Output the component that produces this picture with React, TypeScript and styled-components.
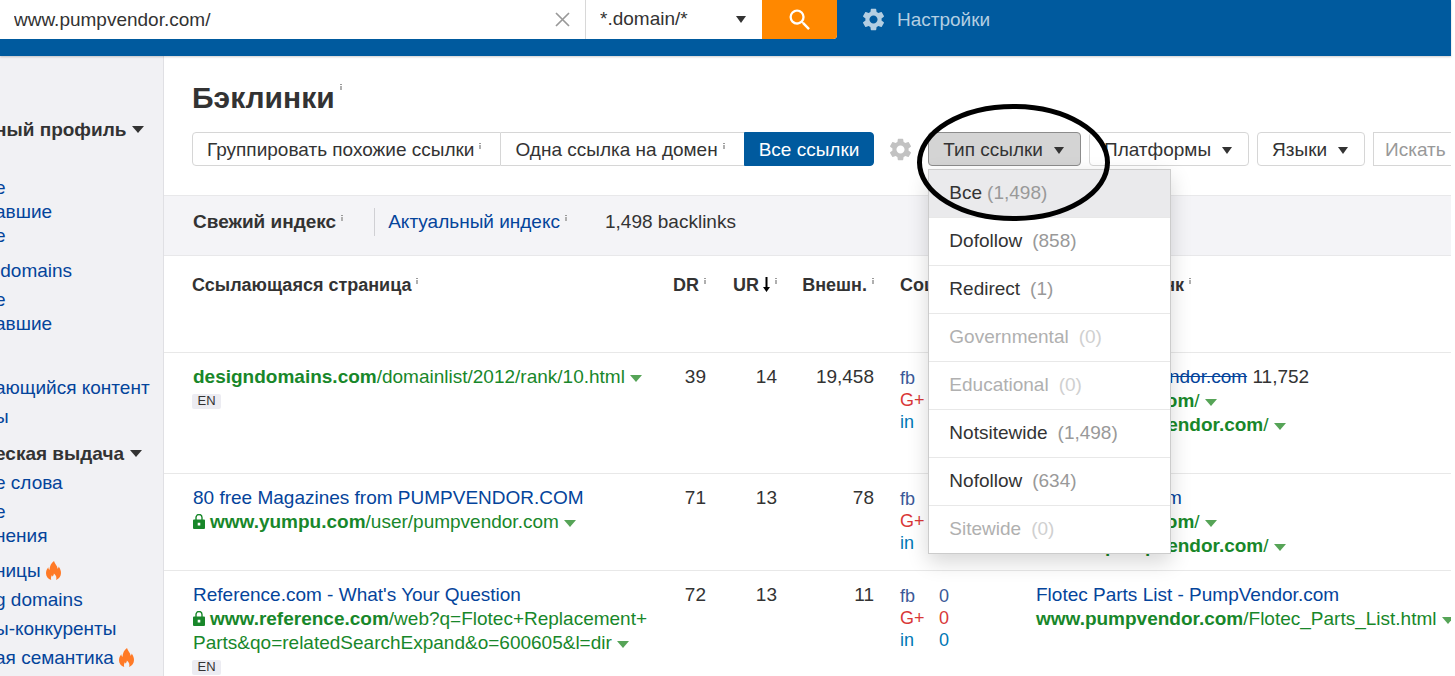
import React from "react";
import styled, { createGlobalStyle } from "styled-components";
import { MdSettings, MdSearch } from "react-icons/md";

const c = {
  blue: "#005a9e",
  orange: "#ff8800",
  link: "#04449b",
  green: "#18872a",
  caretGreen: "#56a457",
  text: "#333333",
  line: "#e8e8e8",
};

const GlobalStyle = createGlobalStyle`
  * { box-sizing: border-box; }
  body {
    margin: 0;
    background: #fff;
    color: ${c.text};
    font: 19px/24px "Liberation Sans", Arial, sans-serif;
  }
  button, input, select { font: inherit; color: inherit; margin: 0; }
  a { text-decoration: none; color: ${c.link}; }
  ul { list-style: none; margin: 0; padding: 0; }
`;

const Page = styled.div`
  display: flex;
  flex-direction: column;
  height: 100vh;
  padding-right: 4px;
  overflow: hidden;
`;

/* ---------- top bar ---------- */

const TopBar = styled.header`
  display: flex;
  align-items: flex-start;
  flex: none;
  height: 56px;
  background: ${c.blue};
  box-shadow: 0 1px 2px rgba(0, 0, 0, 0.2);
  position: relative;
`;

const SearchForm = styled.form`
  display: flex;
  height: 39px;
  background: #fff;
  border-radius: 0 0 4px 0;
`;

const UrlField = styled.div`
  display: flex;
  align-items: center;
  width: 586px;
  padding: 0 15px 0 14px;
  border-right: 1px solid #d8d8d8;
`;

const UrlInput = styled.input`
  flex: 1;
  min-width: 0;
  padding: 0;
  border: 0;
  outline: 0;
  background: none;
`;

const ClearButton = styled.button`
  display: flex;
  padding: 0;
  border: 0;
  background: none;
`;

const ModeField = styled.div`
  display: flex;
  align-items: center;
  width: 176px;
  padding-right: 16px;
`;

const ModeSelect = styled.select`
  flex: 1;
  min-width: 0;
  padding: 0 0 2px 14px;
  border: 0;
  outline: 0;
  background: none;
  appearance: none;
`;

const SearchButton = styled.button`
  display: flex;
  align-items: center;
  justify-content: center;
  width: 75px;
  padding: 0;
  border: 0;
  border-radius: 0 0 4px 0;
  background: ${c.orange};
  color: #fff;
`;

const SettingsLink = styled.a`
  display: flex;
  align-items: center;
  gap: 10px;
  height: 39px;
  margin-left: 23px;
  color: #b3cee2;
`;

/* ---------- shared marks ---------- */

const Caret = styled.span<{ $wide?: boolean }>`
  display: inline-block;
  flex: none;
  border: ${(p) => (p.$wide ? "6px" : "5px")} solid transparent;
  border-top: 7px solid ${c.text};
  border-bottom: 0;
`;

const InfoSvg = styled.svg`
  flex: none;
  margin-left: 5px;
  vertical-align: 7px;
`;

const Info = () => (
  <InfoSvg width="2" height="6" viewBox="0 0 2 6" aria-hidden="true">
    <path d="M0 0h2v1H0z" fill="#999" />
    <path d="M0 2h2v4H0z" fill="#b0b0b0" />
  </InfoSvg>
);

/* ---------- sidebar ---------- */

const Body = styled.div`
  display: flex;
  flex: 1;
  min-height: 0;
`;

const Sidebar = styled.nav`
  flex: none;
  width: 164px;
  padding-top: 59px;
  overflow: hidden;
  white-space: nowrap;
  background: #f1f1f4;
  border-right: 1px solid #e0e0e4;
`;

const Group = styled.section`
  margin: 0 0 8px -5px;
`;

const GroupTitle = styled.h2`
  display: flex;
  align-items: center;
  gap: 6px;
  margin: 0;
  font-size: 19px;
  line-height: 29px;
`;

const Item = styled.li`
  display: flex;
  align-items: center;
  gap: 5px;
  min-height: 29px;
`;

const SubList = styled.ul`
  padding: 3px 0 8px;
`;

const SubItem = styled.li`
  height: 24px;
`;

const Flame = () => (
  <svg width="15" height="19" viewBox="0 0 15 19" aria-hidden="true">
    <path
      fill="#ff7a26"
      d="M8 0c.5 2.600 3.400 4.600 3.600 7.700.7-.4 1-1.200 1-2.100C14.200 7.600 15 9.800 15 12c0 3.200-1.800 5.700-4.900 7 .8-2.500.1-4.700-2.200-6.500-.1 1.500-.6 2.300-1.400 3-.1-.5-.4-.9-.7-1.200-.8 1.500-1 3-.6 4.700C2 17.900 0 15.400 0 12.200c0-2.200.8-4.200 2.300-6 .1 1.300.5 2.100 1.200 2.600C3.700 5.200 5.100 2.100 8 0z"
    />
  </svg>
);

/* ---------- main ---------- */

const Main = styled.main`
  flex: 1;
  min-width: 0;
  overflow: hidden;
`;

const Title = styled.h1`
  display: flex;
  align-items: flex-start;
  margin: 24px 0 16px 28px;
  font-size: 30px;
  line-height: 36px;
`;

const TitleInfo = styled.span`
  display: flex;
  padding-top: 4px;
`;

const Toolbar = styled.div`
  display: flex;
  align-items: center;
  gap: 8px;
  height: 34px;
  margin: 0 0 29px 28px;
  white-space: nowrap;
`;

const Segments = styled.div`
  display: flex;
  flex: none;
`;

const Segment = styled.button<{ $active?: boolean }>`
  height: 34px;
  padding: 2px ${(p) => (p.$active ? "14px" : "19px")} 0 14px;
  border: 1px solid ${(p) => (p.$active ? c.blue : "#d6d6d6")};
  background: ${(p) => (p.$active ? c.blue : "#fff")};
  color: ${(p) => (p.$active ? "#fff" : c.text)};
  &:first-child { border-radius: 4px 0 0 4px; }
  &:nth-child(2) { border-width: 1px 0; }
  &:last-child { border-radius: 0 4px 4px 0; }
`;

const GearButton = styled.button`
  display: flex;
  flex: none;
  margin: 0 6px 0 5px;
  padding: 0;
  border: 0;
  background: none;
  color: #c2c2c2;
`;

const FilterButton = styled.button<{ $open?: boolean }>`
  display: flex;
  align-items: center;
  flex: none;
  gap: 11px;
  height: 34px;
  padding: 2px 16px 0 14px;
  border: 1px solid ${(p) => (p.$open ? "#8c8c8c" : "#d6d6d6")};
  border-radius: 4px;
  background: ${(p) => (p.$open ? "#d4d4d4" : "#fff")};
`;

const FilterSearch = styled.input`
  flex: 1;
  min-width: 0;
  height: 34px;
  padding: 2px 0 0 11px;
  border: 1px solid #d6d6d6;
  border-right: 0;
  outline: 0;
  &::placeholder { color: #999; opacity: 1; }
`;

const MenuAnchor = styled.div`
  position: relative;
  flex: none;
`;

const Menu = styled.ul`
  position: absolute;
  z-index: 2;
  top: 37px;
  left: 0;
  width: 243px;
  border: 1px solid #ccc;
  background: #fff;
  box-shadow: 0 8px 20px rgba(0, 0, 0, 0.16);
`;

const MenuItem = styled.li`
  border-top: 1px solid ${c.line};
  &:first-child { border-top: 0; }
`;

const MenuButton = styled.button<{ $selected?: boolean }>`
  display: flex;
  align-items: center;
  gap: ${(p) => (p.$selected ? "5px" : "10px")};
  width: 100%;
  height: 47px;
  padding: 0 20px 2px;
  border: 0;
  background: ${(p) => (p.$selected ? "#eaeaec" : "none")};
  &:disabled { color: #b0b0b0; }
`;

const Count = styled.span<{ $dim?: boolean }>`
  color: ${(p) => (p.$dim ? "#d0d0d0" : "#999")};
`;

const Highlight = styled.svg`
  position: absolute;
  z-index: 3;
  top: -28px;
  left: -11px;
  pointer-events: none;
`;

const IndexBar = styled.div`
  display: flex;
  align-items: center;
  height: 61px;
  padding: 12px 0 19px 29px;
  border: solid #e8e8ea;
  border-width: 1px 0;
  background: #f4f4f7;
  white-space: nowrap;
`;

const Current = styled.strong`
  padding-right: 31px;
`;

const Other = styled.span`
  height: 28px;
  margin-right: 38px;
  padding: 2px 0 0 13px;
  border-left: 1px solid #d0d0d4;
`;

/* ---------- table ---------- */

const Table = styled.table`
  width: 100%;
  border-collapse: separate;
  border-spacing: 0;
  table-layout: fixed;
  white-space: nowrap;
`;

const Col = styled.col<{ $width?: number }>`
  width: ${(p) => (p.$width ? `${p.$width}px` : "auto")};
`;

const Head = styled.th<{ $right?: boolean }>`
  height: 97px;
  padding: 17px 0 0 ${(p) => (p.$right ? "0" : "26px")};
  border-bottom: 1px solid ${c.line};
  font-size: 18px;
  text-align: ${(p) => (p.$right ? "right" : "left")};
  vertical-align: top;
  &:first-child { padding-left: 28px; }
`;

const Cell = styled.td<{ $right?: boolean }>`
  padding: 12px 0 12px ${(p) => (p.$right ? "0" : "26px")};
  border-bottom: 1px solid ${c.line};
  text-align: ${(p) => (p.$right ? "right" : "left")};
  vertical-align: top;
  &:first-child { padding-left: 29px; }
`;

const Line = styled.div<{ $nested?: boolean }>`
  min-height: 24px;
  padding-left: ${(p) => (p.$nested ? "20px" : "0")};
`;

const Url = styled.a`
  color: ${c.green};
`;

const UrlCaret = styled.span`
  display: inline-block;
  margin-left: 5px;
  border: 6px solid transparent;
  border-top: 7px solid ${c.caretGreen};
  border-bottom: 0;
  vertical-align: 1px;
`;

const Lang = styled.span`
  display: block;
  width: 29px;
  height: 15px;
  margin: 5px 0 0 -1px;
  border-radius: 2px;
  background: #ececf2;
  font-size: 13px;
  line-height: 14px;
  text-align: center;
`;

const LockSvg = styled.svg`
  margin-right: 5px;
  vertical-align: -1px;
`;

const Lock = () => (
  <LockSvg width="12" height="15" viewBox="0 0 12 15" aria-hidden="true">
    <path d="M3 6V3.500a3 3 0 0 1 6 0V6" fill="none" stroke={c.green} strokeWidth="1.400" />
    <path
      fillRule="evenodd"
      fill={c.green}
      d="M1 5.500h10a1 1 0 0 1 1 1V14a1 1 0 0 1-1 1H1a1 1 0 0 1-1-1V6.500a1 1 0 0 1 1-1zM4.700 8.800v2.600h2.600V8.800z"
    />
  </LockSvg>
);

const SortSvg = styled.svg`
  margin-left: 4px;
  vertical-align: -1px;
`;

const SortArrow = () => (
  <SortSvg width="7" height="15" viewBox="0 0 7 15" aria-hidden="true">
    <path d="M2.500 0h2v10H7l-3.500 5L0 10h2.500z" fill="#000" />
  </SortSvg>
);

const Social = styled.ul`
  padding-top: 2px;
  font-size: 18px;
  line-height: 22px;
`;

const SocialRow = styled.li<{ $color: string }>`
  display: grid;
  grid-template-columns: 39px 1fr;
  color: ${(p) => p.$color};
`;

const SocialCounts = () => (
  <Social>
    <SocialRow $color="#3b5998"><span>fb</span><span>0</span></SocialRow>
    <SocialRow $color="#d93838"><span>G+</span><span>0</span></SocialRow>
    <SocialRow $color="#0077b5"><span>in</span><span>0</span></SocialRow>
  </Social>
);

const filters = [
  { label: "Все", count: "1,498", selected: true },
  { label: "Dofollow", count: "858" },
  { label: "Redirect", count: "1" },
  { label: "Governmental", count: "0" },
  { label: "Educational", count: "0" },
  { label: "Notsitewide", count: "1,498" },
  { label: "Nofollow", count: "634" },
  { label: "Sitewide", count: "0" },
];

const SideSub = ({ items }: { items: string[] }) => (
  <li>
    <SubList>
      {items.map((label, i) => (
        <SubItem key={i}><a href="#">{label}</a></SubItem>
      ))}
    </SubList>
  </li>
);

const SideItem = ({ label, hot }: { label?: string; hot?: boolean }) => (
  <Item>
    {label && <a href="#">{label}</a>}
    {hot && <Flame />}
  </Item>
);

export default function App() {
  return (
    <Page>
      <GlobalStyle />
      <TopBar>
        <SearchForm onSubmit={(e) => e.preventDefault()}>
          <UrlField>
            <UrlInput aria-label="URL" defaultValue="www.pumpvendor.com/" />
            <ClearButton type="button" aria-label="Очистить">
              <svg width="15" height="15" viewBox="0 0 15 15">
                <path d="M1 1l13 13M14 1L1 14" stroke="#999" strokeWidth="1.700" />
              </svg>
            </ClearButton>
          </UrlField>
          <ModeField>
            <ModeSelect aria-label="Режим"><option>*.domain/*</option></ModeSelect>
            <Caret />
          </ModeField>
          <SearchButton type="submit" aria-label="Поиск"><MdSearch size={28} /></SearchButton>
        </SearchForm>
        <SettingsLink href="#"><MdSettings size={27} />Настройки</SettingsLink>
      </TopBar>

      <Body>
        <Sidebar>
          <Group>
            <GroupTitle>ный профиль <Caret $wide /></GroupTitle>
            <ul>
              <SideItem />
              <SideSub items={["е", "авшие", "е"]} />
              <SideItem label={"\u00a0domains"} />
              <SideSub items={["е", "авшие"]} />
              <SideItem />
              <SideItem label="ающийся контент" />
              <SideItem label="ы" />
            </ul>
          </Group>
          <Group>
            <GroupTitle>еская выдача <Caret $wide /></GroupTitle>
            <ul>
              <SideItem label="е слова" />
              <SideSub items={["е", "нения"]} />
              <SideItem label="ницы" hot />
              <SideItem label="g domains" />
              <SideItem label="ы-конкуренты" />
              <SideItem label="ая семантика" hot />
            </ul>
          </Group>
        </Sidebar>

        <Main>
          <Title>Бэклинки<TitleInfo><Info /></TitleInfo></Title>
          <Toolbar>
            <Segments>
              <Segment>Группировать похожие ссылки<Info /></Segment>
              <Segment>Одна ссылка на домен<Info /></Segment>
              <Segment $active>Все ссылки</Segment>
            </Segments>
            <GearButton aria-label="Параметры"><MdSettings size={27} /></GearButton>
            <MenuAnchor>
              <FilterButton $open aria-expanded="true">Тип ссылки <Caret /></FilterButton>
              <Menu>
                {filters.map((f) => (
                  <MenuItem key={f.label}>
                    <MenuButton $selected={f.selected} disabled={f.count === "0"}>
                      <span>{f.label}</span>
                      <Count $dim={f.count === "0"}>({f.count})</Count>
                    </MenuButton>
                  </MenuItem>
                ))}
              </Menu>
              <Highlight width="193" height="117" viewBox="0 0 193 117" aria-hidden="true">
                <ellipse cx="96.500" cy="58.500" rx="94" ry="56" fill="none" stroke="#000" strokeWidth="5" />
              </Highlight>
            </MenuAnchor>
            <FilterButton>Платформы <Caret /></FilterButton>
            <FilterButton>Языки <Caret /></FilterButton>
            <FilterSearch aria-label="Искать" placeholder="Искать" />
          </Toolbar>

          <IndexBar>
            <Current>Свежий индекс<Info /></Current>
            <Other><a href="#">Актуальный индекс</a><Info /></Other>
            <span>1,498 backlinks</span>
          </IndexBar>

          <Table>
            <colgroup>
              <Col $width={496} />
              <Col $width={46} />
              <Col $width={71} />
              <Col $width={97} />
              <Col $width={136} />
              <Col />
            </colgroup>
            <thead>
              <tr>
                <Head>Ссылающаяся страница<Info /></Head>
                <Head $right>DR<Info /></Head>
                <Head $right>UR<SortArrow /><Info /></Head>
                <Head $right>Внешн.<Info /></Head>
                <Head>Соц. сети<Info /></Head>
                <Head>Анкор и бэклинк<Info /></Head>
              </tr>
            </thead>
            <tbody>
              <tr>
                <Cell>
                  <Line><Url href="#"><b>designdomains.com</b>/domainlist/2012/rank/10.html</Url><UrlCaret /></Line>
                  <Lang>EN</Lang>
                </Cell>
                <Cell $right>39</Cell>
                <Cell $right>14</Cell>
                <Cell $right>19,458</Cell>
                <Cell><SocialCounts /></Cell>
                <Cell>
                  <Line $nested><a href="#"><s>www.pumpvendor.com</s></a> 11,752</Line>
                  <Line><Url href="#"><b>pumpvendor.com</b>/</Url><UrlCaret /></Line>
                  <Line $nested><Url href="#"><b>www.pumpvendor.com</b>/</Url><UrlCaret /></Line>
                  <Line />
                </Cell>
              </tr>
              <tr>
                <Cell>
                  <Line><a href="#">80 free Magazines from PUMPVENDOR.COM</a></Line>
                  <Line><Lock /><Url href="#"><b>www.yumpu.com</b>/user/pumpvendor.com</Url><UrlCaret /></Line>
                </Cell>
                <Cell $right>71</Cell>
                <Cell $right>13</Cell>
                <Cell $right>78</Cell>
                <Cell><SocialCounts /></Cell>
                <Cell>
                  <Line><a href="#">pumpvendor.com</a></Line>
                  <Line><Url href="#"><b>pumpvendor.com</b>/</Url><UrlCaret /></Line>
                  <Line $nested><Url href="#"><b>www.pumpvendor.com</b>/</Url><UrlCaret /></Line>
                </Cell>
              </tr>
              <tr>
                <Cell>
                  <Line><a href="#">Reference.com - What's Your Question</a></Line>
                  <Line>
                    <Lock /><Url href="#"><b>www.reference.com</b>/web?q=Flotec+Replacement+<br />Parts&amp;qo=relatedSearchExpand&amp;o=600605&amp;l=dir</Url><UrlCaret />
                  </Line>
                  <Lang>EN</Lang>
                </Cell>
                <Cell $right>72</Cell>
                <Cell $right>13</Cell>
                <Cell $right>11</Cell>
                <Cell><SocialCounts /></Cell>
                <Cell>
                  <Line><a href="#">Flotec Parts List - PumpVendor.com</a></Line>
                  <Line><Url href="#"><b>www.pumpvendor.com</b>/Flotec_Parts_List.html</Url><UrlCaret /></Line>
                </Cell>
              </tr>
            </tbody>
          </Table>
        </Main>
      </Body>
    </Page>
  );
}
